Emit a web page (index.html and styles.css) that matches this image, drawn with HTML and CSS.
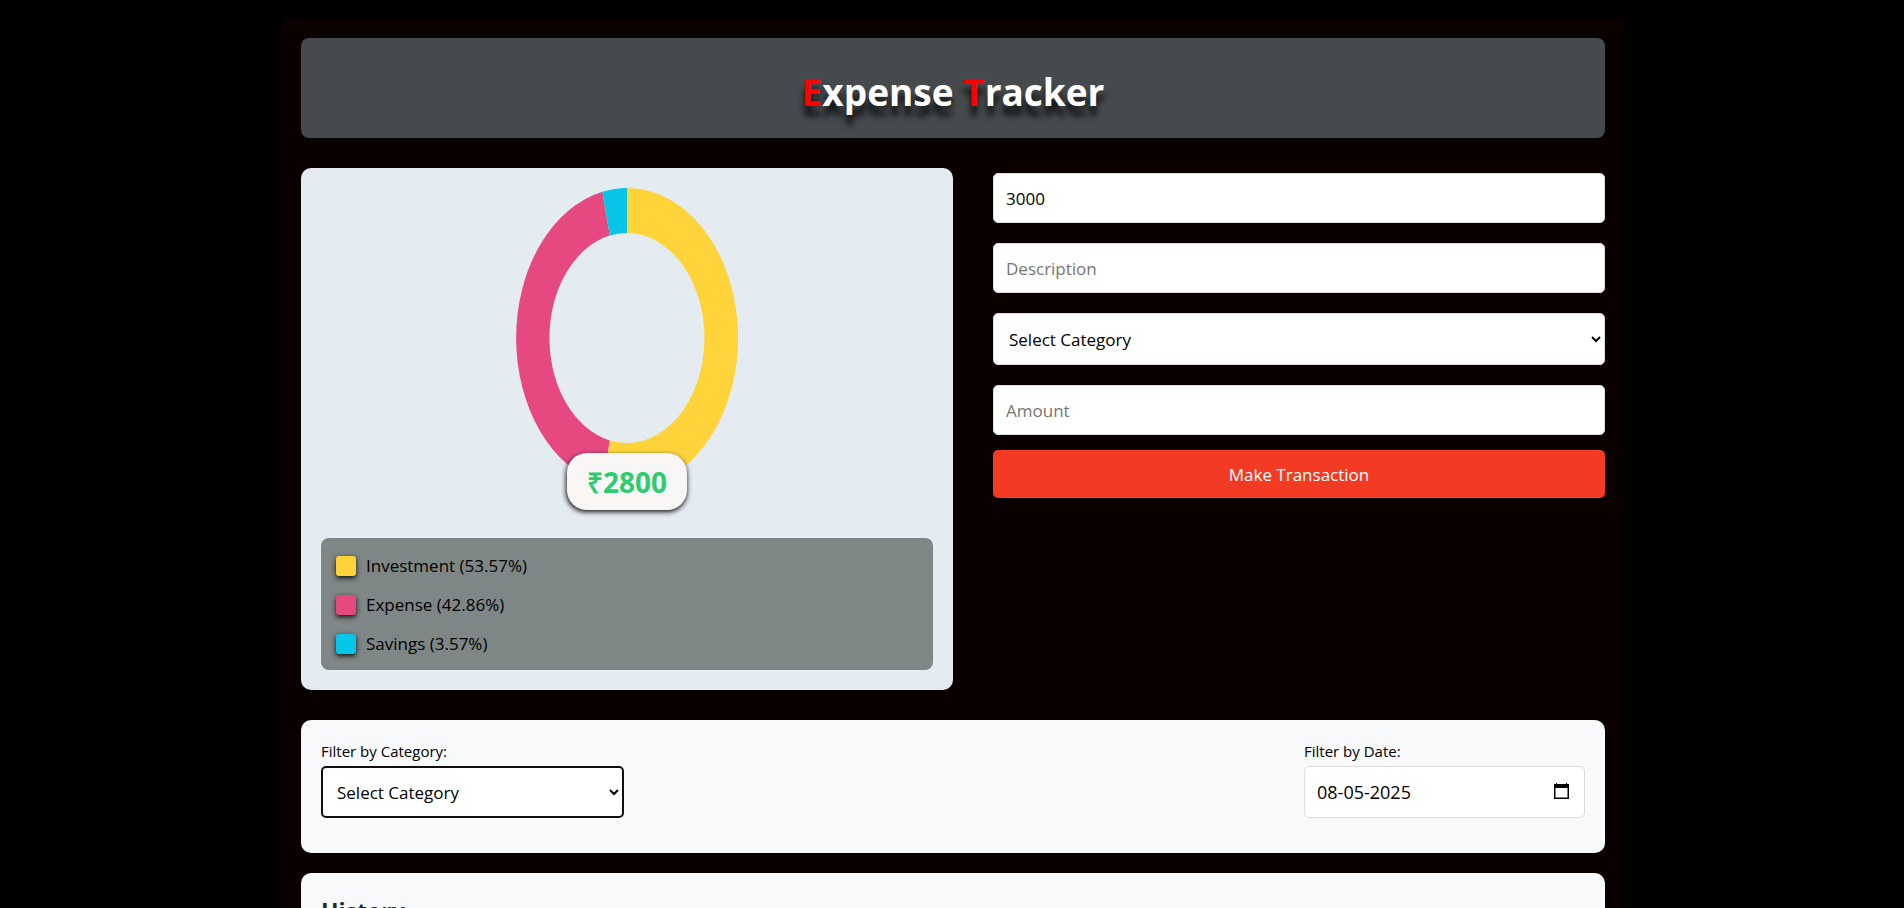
FILE: index.html
```
<!DOCTYPE html>
<html lang="en">
<head>
  <meta charset="utf-8">
  <meta name="viewport" content="width=device-width, initial-scale=1">
  <title>Expense Tracker</title>
  <link rel="stylesheet" href="styles.css">
</head>
<body>
  <main class="container">
    <header class="header">
      <h1 class="title"><span class="accent">E</span>xpense <span class="accent">T</span>racker</h1>
    </header>

    <div class="overview">
      <section class="chart-card">
        <div class="chart-box">
          <svg class="chart" viewBox="0 0 222 300" role="img" aria-label="Spending by category">
            <path fill="#ffd43b" d="M111 0A111 150 0 1 1 86.3 296.2L93.8 252.4A77.5 105 0 1 0 111 45Z"/>
            <path fill="#e64980" d="M86.3 296.2A111 150 0 0 1 86.3 3.8L93.8 47.6A77.5 105 0 0 0 93.8 252.4Z"/>
            <path fill="#06c5e9" d="M86.3 3.8A111 150 0 0 1 111 0V45A77.5 105 0 0 0 93.8 47.6Z"/>
          </svg>
          <div class="balance">₹2800</div>
        </div>
        <ul class="legend">
          <li class="legend-item"><span class="swatch investment"></span>Investment (53.57%)</li>
          <li class="legend-item"><span class="swatch expense"></span>Expense (42.86%)</li>
          <li class="legend-item"><span class="swatch savings"></span>Savings (3.57%)</li>
        </ul>
      </section>

      <form class="form">
        <input class="field" type="text" inputmode="numeric" value="3000" aria-label="Balance">
        <input class="field" type="text" placeholder="Description" aria-label="Description">
        <select class="field select" aria-label="Category">
          <option>Select Category</option>
          <option>Investment</option>
          <option>Expense</option>
          <option>Savings</option>
        </select>
        <input class="field" type="text" inputmode="numeric" placeholder="Amount" aria-label="Amount">
        <button class="submit" type="button">Make Transaction</button>
      </form>
    </div>

    <section class="panel filters">
      <div class="filter">
        <label for="filter-category">Filter by Category:</label>
        <select class="field select active" id="filter-category">
          <option>Select Category</option>
          <option>Investment</option>
          <option>Expense</option>
          <option>Savings</option>
        </select>
      </div>
      <div class="filter filter-date">
        <label for="filter-date">Filter by Date:</label>
        <div class="date-box">
          <input class="field date" id="filter-date" type="text" value="08-05-2025">
          <button class="picker" type="button" aria-label="Open calendar">
            <svg viewBox="0 0 15 16" width="15" height="16">
              <path fill="#000" d="M2 0h1v1h9V0h1v1h2v15H0V1h2zM1.500 5v9.500h12V5z"/>
            </svg>
          </button>
        </div>
      </div>
    </section>

    <section class="panel history">
      <h2 class="history-title">History</h2>
    </section>
  </main>
</body>
</html>
```
FILE: styles.css
```
* {
  box-sizing: border-box;
}

body {
  margin: 0;
  padding: 18px 0 0 2px;
  background: #000;
  color: #000;
  font-family: "Segoe UI", "Open Sans", sans-serif;
  font-size: 17px;
}

.container {
  max-width: 1344px;
  margin: 0 auto;
  padding: 20px;
  border-radius: 10px;
  background: #0a0000;
}

.header {
  padding: 24px 20px 16px;
  margin-bottom: 30px;
  border-radius: 8px;
  background: #464a4d;
  text-align: center;
}

.title {
  margin: 0;
  color: #fff;
  font-size: 37px;
  line-height: 60px;
  text-shadow: 0 10px 6px rgba(0, 0, 0, 0.8);
}

.accent {
  color: #f00;
}

.overview {
  display: grid;
  grid-template-columns: 1fr 1fr;
  margin-bottom: 30px;
}

.chart-card {
  padding: 20px;
  border-radius: 10px;
  background: #e4ebf1;
}

.chart-box {
  position: relative;
  padding-bottom: 50px;
}

.chart {
  display: block;
  width: 222px;
  height: 300px;
  margin: 0 auto;
}

.balance {
  position: absolute;
  bottom: 28px;
  left: 50%;
  padding: 12px 20px 10px;
  border-radius: 20px;
  background: #f8f7f5;
  box-shadow: 0 2px 5px rgba(0, 0, 0, 0.9);
  color: #2ecc71;
  font-size: 28px;
  font-weight: 700;
  line-height: 35px;
  transform: translateX(-50%);
}

.legend {
  display: flex;
  flex-direction: column;
  gap: 15px;
  margin: 0;
  padding: 16px 15px 14px;
  border-radius: 8px;
  background: #7f8686;
  list-style: none;
}

.legend-item {
  display: flex;
  align-items: center;
  gap: 10px;
  line-height: 24px;
}

.swatch {
  width: 20px;
  height: 20px;
  border-radius: 3px;
  box-shadow: 0 2px 5px rgba(0, 0, 0, 0.9);
}

.investment {
  background: #ffd43b;
}

.expense {
  background: #e64980;
}

.savings {
  background: #06c5e9;
}

.form {
  display: flex;
  flex-direction: column;
  gap: 20px;
  padding: 5px 0 0 40px;
}

.field {
  width: 100%;
  height: 50px;
  padding: 0 12px;
  border: 1px solid #ddd;
  border-radius: 5px;
  background: #fff;
  color: #000;
  font: inherit;
}

.field::placeholder {
  color: #757575;
}

.select {
  height: 52px;
  padding: 0 0 0 11px;
}

.submit {
  height: 48px;
  margin-top: -5px;
  border: 0;
  border-radius: 5px;
  background: #f33a22;
  color: #fff;
  font: inherit;
}

.panel {
  margin-bottom: 20px;
  padding: 20px;
  border-radius: 10px;
  background: #f8f9fb;
}

.filters {
  display: flex;
  justify-content: space-between;
  padding-bottom: 35px;
}

.filter {
  display: flex;
  flex-direction: column;
  gap: 4px;
  width: 24%;
  font-size: 15px;
  line-height: 22px;
}

.filter-date {
  width: 281px;
}

.filter .field {
  height: 52px;
  font-size: 17px;
}

.filter .date {
  font-size: 18px;
}

.filter .active {
  padding-left: 10px;
  border: 2px solid #101010;
  outline: 0;
}

.date-box {
  position: relative;
}

.picker {
  position: absolute;
  top: 17px;
  right: 16px;
  padding: 0;
  border: 0;
  background: none;
}

.picker svg {
  display: block;
}

.history-title {
  margin: 0;
  color: #1b2838;
  font-size: 23px;
  line-height: 36px;
}
```
